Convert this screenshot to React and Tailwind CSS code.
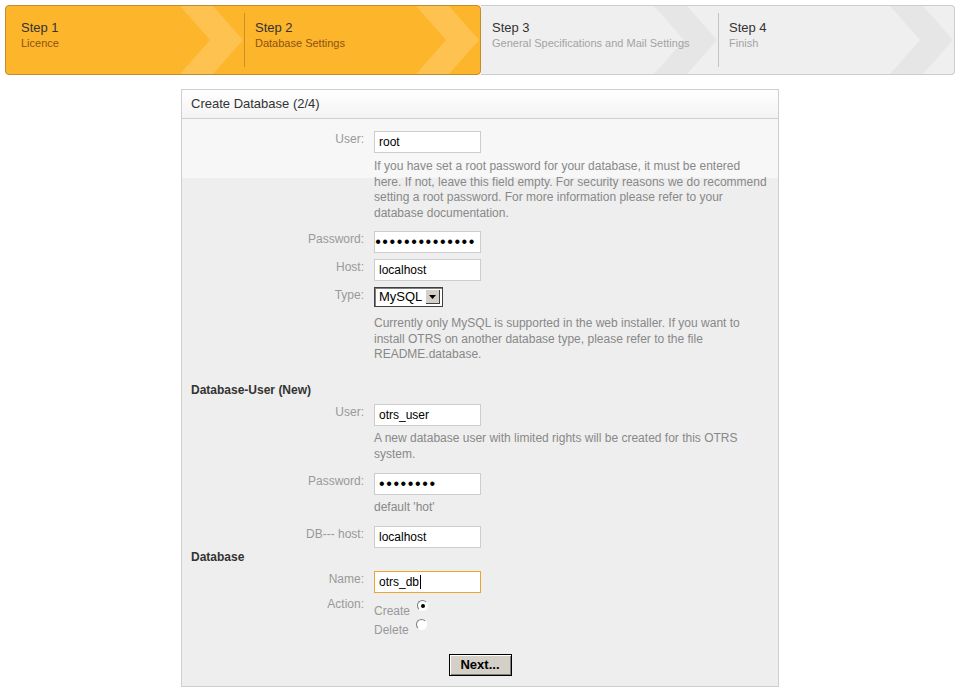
const steps = [
  { title: "Step 1", sub: "Licence", active: true, pl: "pl-[15px]", w: "w-[238px]" },
  { title: "Step 2", sub: "Database Settings", active: true, pl: "pl-[10px]", w: "w-[235px]" },
  { title: "Step 3", sub: "General Specifications and Mail Settings", active: false, pl: "pl-[11px]", w: "w-[237px]" },
  { title: "Step 4", sub: "Finish", active: false, pl: "pl-[10px]", w: "w-[235px]" },
];

const Chevron = ({ color }) => (
  <svg
    className="absolute right-0 top-0 h-full w-[64px]"
    viewBox="0 0 64 68"
    preserveAspectRatio="none"
  >
    <polygon points="0,0 33,0 63,34 33,68 0,68 30,34" fill={color} />
  </svg>
);

const Step = ({ step }) => (
  <div className={`relative h-full overflow-hidden pt-[14px] ${step.w} ${step.pl}`}>
    <Chevron color={step.active ? "#fdc24f" : "#e6e6e6"} />
    <div className="relative text-[13px] leading-[16px] text-[#333]">{step.title}</div>
    <div
      className={`relative text-[11px] leading-[14px] ${
        step.active ? "text-[#8c520e]" : "text-[#a3a3a3]"
      }`}
    >
      {step.sub}
    </div>
  </div>
);

const Field = ({ children, focus, end }) => (
  <div
    className={`flex h-[22px] w-[107px] items-center overflow-hidden border bg-white px-[4px] text-[12px] text-black ${
      focus ? "border-[#f0a22e]" : "border-[#cdcdcd]"
    } ${end ? "justify-end" : ""}`}
  >
    {children}
  </div>
);

const Dots = ({ count }) => (
  <span className="shrink-0 whitespace-nowrap text-[16px] leading-[16px] tracking-[1.6px]">
    {"•".repeat(count)}
  </span>
);

const Row = ({ label, className = "", children }) => (
  <div className={`flex items-start ${className}`}>
    <div className="w-[182px] pt-[1px] text-right text-[12px] leading-[14px] text-[#999]">
      {label}
    </div>
    <div className="ml-[10px]">{children}</div>
  </div>
);

const Help = ({ className = "", children }) => (
  <div className={`ml-[192px] w-[396px] text-[12px] leading-[15.7px] text-[#888] ${className}`}>
    {children}
  </div>
);

const Radio = ({ checked }) => (
  <div className="flex h-[11px] w-[11px] items-center justify-center rounded-full border border-b-[#ffffff] border-l-[#7d7d7d] border-r-[#ffffff] border-t-[#7d7d7d] bg-white">
    {checked && <div className="h-[4px] w-[4px] rounded-full bg-black" />}
  </div>
);

export default function App() {
  return (
    <div className="min-h-[696px] bg-white px-[5px] pt-[5px] font-['Liberation_Sans',Arial,sans-serif]">
      {/* wizard steps */}
      <div className="flex h-[70px] w-[950px]">
        <div className="flex h-full w-[476px] rounded-[4px] border border-[#c48b2e] bg-[#fdb52c]">
          <Step step={steps[0]} />
          <div className="my-[7px] w-px bg-[#cd8f25]" />
          <Step step={steps[1]} />
        </div>
        <div className="flex h-full w-[474px] rounded-r-[4px] border border-l-0 border-[#cccccc] bg-[#efefef]">
          <Step step={steps[2]} />
          <div className="my-[7px] w-px bg-[#c4c4c4]" />
          <Step step={steps[3]} />
        </div>
      </div>

      {/* panel */}
      <div className="ml-[176px] mt-[14px] w-[598px] border border-[#cfcfcf]">
        <div className="flex h-[29px] items-center border-b border-[#cfcfcf] bg-[linear-gradient(to_bottom,#ffffff,#f3f3f3)] pl-[9px] text-[13px] text-[#333]">
          Create Database (2/4)
        </div>

        <div className="bg-[linear-gradient(to_bottom,#f7f7f7_0,#f7f7f7_59px,#eeeeee_59px)] pb-[10px] pt-[12px]">
          <Row label="User:">
            <Field>root</Field>
          </Row>
          <Help className="mt-[6px]">
            If you have set a root password for your database, it must be entered here. If not,
            leave this field empty. For security reasons we do recommend setting a root password.
            For more information please refer to your database documentation.
          </Help>

          <Row label="Password:" className="mt-[9px]">
            <Field end>
              <Dots count={15} />
            </Field>
          </Row>
          <Row label="Host:" className="mt-[6px]">
            <Field>localhost</Field>
          </Row>
          <Row label="Type:" className="mt-[6px]">
            <div className="flex h-[20px] w-[69px] items-center border border-[#404040] bg-white pl-[4px] pr-[2px] shadow-[inset_1px_1px_0_#808080]">
              <span className="flex-1 text-[13px] leading-[16px] text-black">MySQL</span>
              <div className="flex h-[15px] w-[15px] items-center justify-center bg-[#d4d0c8] shadow-[inset_1px_1px_0_#ffffff,inset_-1px_-1px_0_#404040]">
                <svg width="7" height="4" viewBox="0 0 7 4">
                  <polygon points="0,0 7,0 3.5,4" fill="#000" />
                </svg>
              </div>
            </div>
          </Row>
          <Help className="mt-[9px]">
            Currently only MySQL is supported in the web installer. If you want to install OTRS on
            another database type, please refer to the file README.database.
          </Help>

          <div className="ml-[9px] mt-[20px] text-[12px] font-bold leading-[14px] text-[#333]">
            Database-User (New)
          </div>
          <Row label="User:" className="mt-[7px]">
            <Field>otrs_user</Field>
          </Row>
          <Help className="mt-[5px]">
            A new database user with limited rights will be created for this OTRS system.
          </Help>

          <Row label="Password:" className="mt-[11px]">
            <Field>
              <Dots count={8} />
            </Field>
          </Row>
          <Help className="mt-[5px]">default 'hot'</Help>

          <Row label="DB--- host:" className="mt-[10px]">
            <Field>localhost</Field>
          </Row>

          <div className="ml-[9px] mt-[2px] text-[12px] font-bold leading-[14px] text-[#333]">
            Database
          </div>
          <Row label="Name:" className="mt-[7px]">
            <Field focus>
              otrs_db
              <span className="ml-[1px] h-[14px] w-px bg-black" />
            </Field>
          </Row>

          <Row label="Action:" className="mt-[3px]">
            <div className="flex h-[19px] items-start">
              <span className="mt-[8px] w-[43px] text-[12px] leading-[14px] text-[#999]">Create</span>
              <div className="mt-[4px]">
                <Radio checked />
              </div>
            </div>
            <div className="flex h-[19px] items-start">
              <span className="mt-[8px] w-[42px] text-[12px] leading-[14px] text-[#999]">Delete</span>
              <div className="mt-[4px]">
                <Radio />
              </div>
            </div>
          </Row>

          <div className="mt-[20px] flex justify-center">
            <button className="h-[22px] w-[63px] border border-black bg-[#d4d0c8] text-[13px] font-bold text-black shadow-[inset_1px_1px_0_#ffffff,inset_-1px_-1px_0_#808080]">
              Next...
            </button>
          </div>
        </div>
      </div>
    </div>
  );
}
